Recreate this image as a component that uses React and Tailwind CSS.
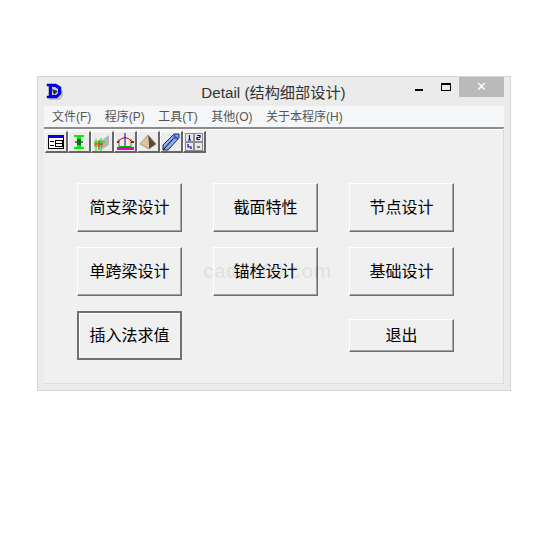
const cjk = 'font-["Liberation_Sans","Noto_Sans_CJK_SC",sans-serif]'

const menus = ['文件(F)', '程序(P)', '工具(T)', '其他(O)', '关于本程序(H)']

function AppIcon() {
  return (
    <svg width="18" height="18" viewBox="0 0 18 18">
      <path d="M3 4h10l4 4v5l-3 4H3z" fill="#c4c4c4" />
      <path d="M1 1h9l5 3v7l-4 4H1v-2h2V3H1z" fill="#0000f0" stroke="#000090" strokeWidth="0.5" />
      <path d="M6 4h3l3 2v4l-2 2H6z" fill="#d0d0e8" />
      <path d="M6 6l6 2-4 4z" fill="#303030" />
    </svg>
  )
}

const tools = [
  <svg key="1" width="18" height="18" viewBox="0 0 18 18">
    <rect x="1.5" y="2.5" width="15" height="13" fill="#fff" stroke="#000" />
    <rect x="1" y="2" width="16" height="3" fill="#0000e0" />
    <path d="M9 7.5h6M9 10.5h6M9 13.5h6M3 8.5h4M3 12.5h4" stroke="#000" />
    <path d="M8.5 7v7M15.5 7v7" stroke="#000" />
  </svg>,
  <svg key="2" width="18" height="18" viewBox="0 0 18 18">
    <path d="M4 2h10v2h-3v10h3v2H4v-2h3V4H4z" fill="#00f000" />
    <path d="M5 9h8M7 7h4M7 11h4" stroke="#000" />
  </svg>,
  <svg key="3" width="18" height="18" viewBox="0 0 18 18">
    <path d="M8 8l8-6v10l-8 5z" fill="#b4b4b4" />
    <path d="M1 9h11M1 13h9M3 6v12M8 5v13" stroke="#00e000" />
    <path d="M1 11h9M6 7v10" stroke="#f00000" />
  </svg>,
  <svg key="4" width="18" height="18" viewBox="0 0 18 18">
    <rect x="1" y="14" width="17" height="3" fill="#f000c0" />
    <path d="M3 6v8M15 6v8M3 13.5h12" stroke="#00b000" />
    <path d="M1 10q8-11 16 0" fill="none" stroke="#e00000" />
    <path d="M9 0v13" stroke="#0000e0" />
    <path d="M1 9h2M15 9h3" stroke="#c00000" strokeWidth="2" />
  </svg>,
  <svg key="5" width="18" height="18" viewBox="0 0 18 18">
    <path d="M9 2l8 9-7 5z" fill="#5f4a32" />
    <path d="M9 2L1 11l9 5z" fill="#dcc4a0" />
    <path d="M9 2L1 11l9 5 7-5z" fill="none" stroke="#8a7254" strokeWidth="0.6" />
  </svg>,
  <svg key="6" width="18" height="18" viewBox="0 0 18 18">
    <path d="M1 12L12 1h5v4L6 17H1z" fill="#8caaf4" stroke="#000" strokeWidth="0.8" />
    <path d="M12 1l-1 5h6" fill="#3a5ad0" />
    <path d="M1 17L11 6" stroke="#000" />
  </svg>,
  <svg key="7" width="18" height="18" viewBox="0 0 18 18">
    <rect x="0" y="0" width="18" height="18" fill="#8c8c8c" />
    <rect x="1" y="1" width="7" height="7" fill="#e8e8e8" />
    <rect x="10" y="1" width="7" height="7" fill="#e8e8e8" />
    <rect x="1" y="10" width="7" height="7" fill="#e8e8e8" />
    <rect x="10" y="10" width="7" height="7" fill="#e8e8e8" />
    <path d="M4.5 2v5M3 7h3M12 2.5h3v2h-3v2h3M3 11v3h3v2M12 14h3" stroke="#0000c0" strokeWidth="1.2" fill="none" />
  </svg>,
]

function Btn({ label, className = 'h-[49px]' }) {
  return (
    <button className={`${className} w-[105px] bg-[#f0f0f0] border border-t-white border-l-white border-r-[#6e6e6e] border-b-[#6e6e6e] shadow-[inset_-1px_-1px_0_#a0a0a0] text-[16px] text-black`}>
      {label}
    </button>
  )
}

export default function App() {
  return (
    <div className={`w-[534px] h-[534px] bg-white pt-[76px] pl-[37px] ${cjk}`}>
      <div className="w-[474px] h-[315px] bg-[#ebebeb] border border-[#d4d4d4] px-[6px] pb-[6px] flex flex-col">
        {/* title bar */}
        <div className="h-[29px] flex items-start relative shrink-0">
          <div className="mt-[6px] ml-[2px]"><AppIcon /></div>
          <div className="flex-1 text-center text-[15.2px] leading-[31px] text-[#333] pl-[16px] pr-[37px]">Detail (结构细部设计)</div>
          <div className="absolute right-0 top-0 flex items-start">
            <div className="w-[8px] h-[2px] bg-black mt-[12px] mr-[18px]" />
            <div className="w-[10px] h-[8px] border border-black border-t-2 mt-[6px] mr-[8px]" />
            <div className="w-[45px] h-[20px] bg-[#bababa] text-white text-[13px] leading-[19px] text-center">✕</div>
          </div>
        </div>

        {/* menu */}
        <div className="h-[21px] shrink-0 bg-[#f5f6f7] flex items-center pl-[8px] gap-[13.5px] text-[12px] text-[#555]">
          {menus.map(m => <span key={m}>{m}</span>)}
        </div>

        {/* client */}
        <div className="flex-1 bg-[#f0f0f0] border-t-2 border-t-[#8c8c8c] border-r border-b border-[#dcdcdc] shadow-[inset_0_1px_0_#fff] flex flex-col">
          <div className="flex pl-px pt-[2px] h-[26px] shrink-0">
            {tools.map((icon, i) => (
              <div key={i} className="w-[23px] h-[22px] flex items-center justify-center bg-[#ececec] border-2 border-t-white border-l-white border-r-[#666] border-b-[#666] border-t-[1px] border-l-[1px]">
                {icon}
              </div>
            ))}
          </div>

          <div className="relative pl-[33px] pt-[28px] flex flex-col gap-[15px]">
            <div className="flex gap-[31px]">
              <Btn label="简支梁设计" />
              <Btn label="截面特性" />
              <Btn label="节点设计" />
            </div>
            <div className="flex gap-[31px]">
              <Btn label="单跨梁设计" />
              <Btn label="锚栓设计" />
              <Btn label="基础设计" />
            </div>
            <div className="flex gap-[31px] items-center">
              <button className="h-[49px] w-[105px] bg-[#f0f0f0] border-2 border-[#707070] shadow-[inset_1px_1px_0_#fff] text-[16px] text-black">插入法求值</button>
              <div className="w-[105px]" />
              <Btn label="退出" className="h-[33px]" />
            </div>
            {/* watermark sits over the buttons */}
            <div className="absolute left-[159px] top-[101px] text-[20px] font-bold tracking-[0.3px] text-black/[0.07] pointer-events-none">cad2000.com</div>
          </div>
        </div>
      </div>
    </div>
  )
}
